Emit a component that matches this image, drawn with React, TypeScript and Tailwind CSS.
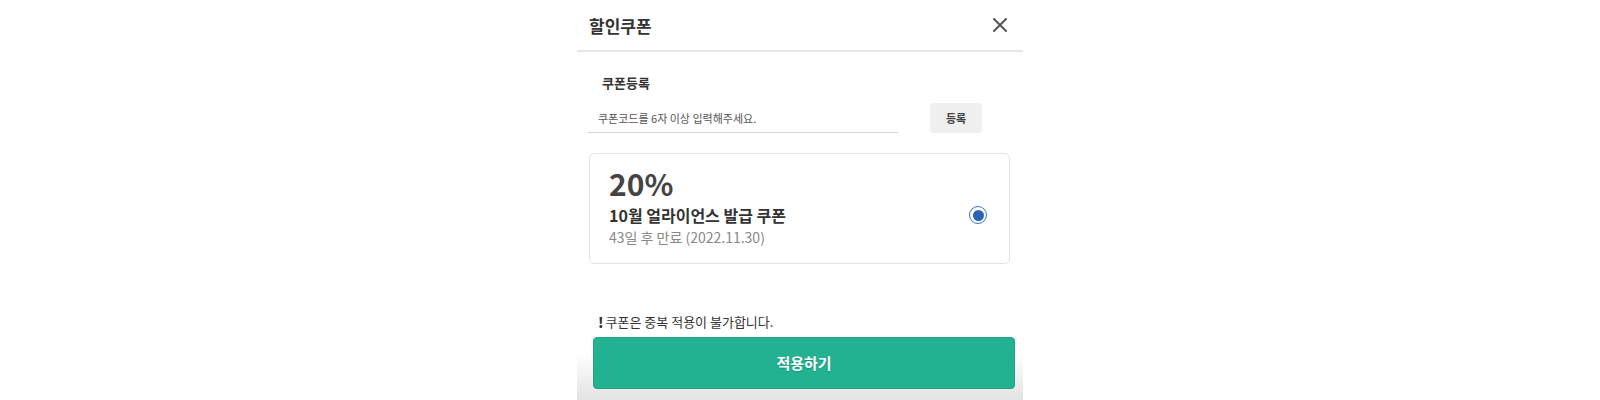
import { useState } from "react";

const font = { fontFamily: '"Noto Sans CJK KR", "Noto Sans", sans-serif' };

export default function App() {
  const [selected, setSelected] = useState(true);

  return (
    <div className="w-full h-[400px] bg-white flex justify-center overflow-hidden" style={font}>
      <div className="w-[446px] h-[400px] flex flex-col">
        {/* Header */}
        <div className="h-[52px] shrink-0 flex items-center justify-between pl-[12px] pr-[16px] border-b-2 border-[#e6e6e6]">
          <h1 className="text-[17px] font-bold text-[#333] leading-none">할인쿠폰</h1>
          <button className="w-[14px] h-[14px] flex items-center justify-center">
            <svg width="14" height="14" viewBox="0 0 14 14">
              <path d="M1 1 L13 13 M13 1 L1 13" stroke="#555" strokeWidth="2" strokeLinecap="round" />
            </svg>
          </button>
        </div>

        {/* Coupon register */}
        <div className="pt-[22px]">
          <p className="pl-[25px] text-[13px] font-bold text-[#333] leading-[18px]">쿠폰등록</p>
          <div className="mt-[11px] flex items-center pl-[11px]">
            <input
              className="w-[310px] h-[30px] border-b border-[#d5d5d5] pl-[10px] text-[11px] text-[#333] placeholder:text-[#555] outline-none bg-transparent"
              placeholder="쿠폰코드를 6자 이상 입력해주세요."
            />
            <button className="ml-[32px] w-[52px] h-[30px] rounded-[4px] bg-[#efefef] text-[11px] font-bold text-[#444]">
              등록
            </button>
          </div>
        </div>

        {/* Coupon card */}
        <div className="mt-[20px] ml-[12px] w-[421px] h-[111px] rounded-[5px] border border-[#e3e3e3] flex items-start justify-between pl-[19px] pr-[22px] pt-[11px]">
          <div>
            <p className="text-[30px] font-bold text-[#444] leading-[36px]">20%</p>
            <p className="mt-[3px] text-[16px] font-bold text-[#333] leading-[22px]">10월 얼라이언스 발급 쿠폰</p>
            <p className="mt-[1px] text-[14px] text-[#888] leading-[20px]">43일 후 만료 (2022.11.30)</p>
          </div>
          <button
            onClick={() => setSelected(!selected)}
            className="mt-[41px] w-[18px] h-[18px] rounded-full border-[1.5px] border-[#3a78c9] flex items-center justify-center"
          >
            {selected && <span className="w-[11px] h-[11px] rounded-full bg-[#2b63b4]" />}
          </button>
        </div>

        {/* Notice */}
        <p className="mt-[49px] pl-[21px] text-[13px] text-[#333] leading-[18px] flex items-center">
          <span className="font-black text-[14px] mr-[2px]">!</span>
          쿠폰은 중복 적용이 불가합니다.
        </p>

        {/* Apply button */}
        <div className="flex-1 pt-[6px] pb-[10px] pl-[16px] bg-linear-to-b from-white from-30% to-[#e3e3e3] flex">
          <button className="w-[422px] h-[52px] rounded-[4px] bg-[#22b292] border border-[#1fa586] text-white text-[15px] font-bold [text-shadow:0_1px_1px_rgba(0,0,0,0.2)]">
            적용하기
          </button>
        </div>
      </div>
    </div>
  );
}
